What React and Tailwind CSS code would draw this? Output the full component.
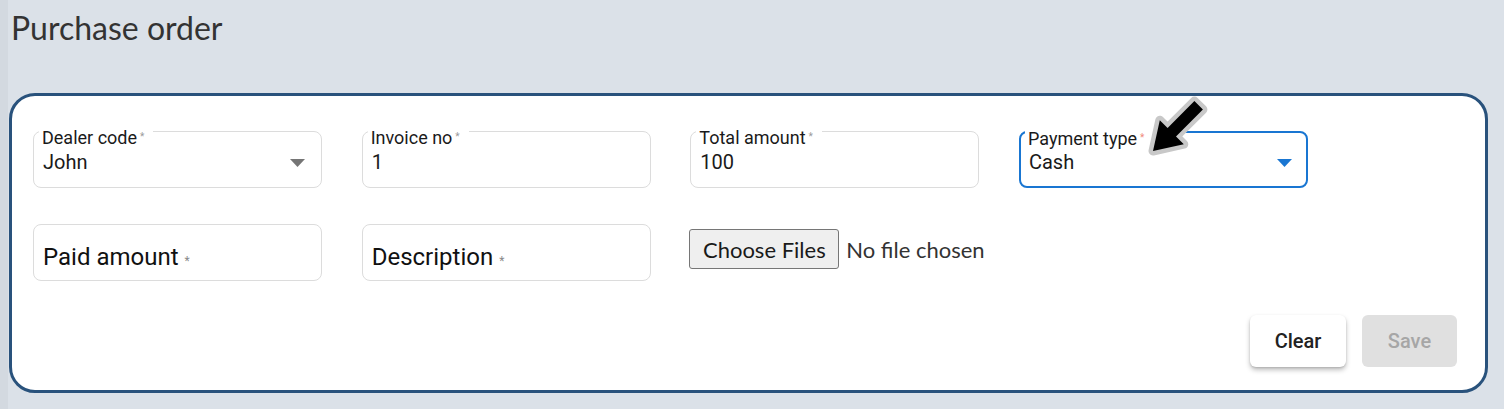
import React from "react";

const roboto = { fontFamily: "Roboto, 'Liberation Sans', sans-serif" };

function Caret({ color }) {
  return (
    <svg width="15" height="8" viewBox="0 0 15 8" className="shrink-0">
      <polygon points="0,0 15,0 7.5,8" fill={color} />
    </svg>
  );
}

function FilledField({ label, value, select, active }) {
  return (
    <div
      className={
        "relative w-[289px] h-[57px] rounded-[8px] bg-white flex items-start " +
        (active ? "border-2 border-[#1976d2]" : "border border-[#dcdcdc]")
      }
    >
      <span
        className={
          "absolute top-[-4px] bg-white pl-[3px] pr-[9px] text-[18px] leading-[18px] text-[#1a1a1a] whitespace-nowrap " +
          (active ? "left-[4px]" : "left-[5px]")
        }
      >
        {label}
        <span
          className={
            "ml-[3px] text-[10px] align-[4px] " +
            (active ? "text-[#f08a7a]" : "text-[#9a9a9a]")
          }
        >
          *
        </span>
      </span>
      <div
        className={
          "flex-1 flex items-center justify-between " +
          (active ? "pt-[17px] pl-[8px] pr-[14px]" : "pt-[18px] pl-[9px] pr-[16px]")
        }
      >
        <span className="text-[20px] leading-[24px] text-[#1a1a1a]">{value}</span>
        {select && (
          <div className="pt-[1px]">
            <Caret color={active ? "#1976d2" : "#757575"} />
          </div>
        )}
      </div>
    </div>
  );
}

function EmptyField({ label }) {
  return (
    <div className="w-[289px] h-[57px] rounded-[8px] bg-white border border-[#dcdcdc] pt-[18px] pl-[9px]">
      <span className="text-[24px] leading-[28px] text-[#111]">
        {label}
        <span className="ml-[6px] text-[12px] text-[#8a8a8a]">*</span>
      </span>
    </div>
  );
}

export default function App() {
  return (
    <div className="relative w-[1504px] h-[409px] bg-[#dbe1e8] flex overflow-hidden" style={roboto}>
      <div className="w-[8px] shrink-0 bg-[#d3d9e0]" />
      <div className="flex-1 pl-[1px] pr-[16px] flex flex-col">
        <h1
          className="pl-[2px] pt-[9px] h-[93px] shrink-0 text-[32px] leading-[38px] text-[#333] font-normal"
          style={{ fontFamily: "Lato, 'Noto Sans', sans-serif" }}
        >
          Purchase order
        </h1>
        <div className="h-[300px] shrink-0 rounded-[26px] border-[3px] border-[#29527c] bg-white pl-[21px] pr-[28px] pt-[35px] flex flex-col">
          <div className="grid grid-cols-[repeat(4,289px)] gap-x-[39.67px] gap-y-[36px]">
            <FilledField label="Dealer code" value="John" select />
            <FilledField label="Invoice no" value="1" />
            <FilledField label="Total amount" value="100" />
            <FilledField label="Payment type" value="Cash" select active />
            <EmptyField label="Paid amount" />
            <EmptyField label="Description" />
            <div
              className="flex items-start pt-[5px] whitespace-nowrap"
              style={{ fontFamily: "Lato, 'Noto Sans', sans-serif" }}
            >
              <span className="shrink-0 w-[150px] h-[40px] -ml-[1px] border border-[#767676] rounded-[3px] bg-[#efefef] flex items-center justify-center text-[22px] text-[#1a1a1a]">
                Choose Files
              </span>
              <span className="shrink-0 ml-[7px] h-[40px] flex items-center text-[22px] text-[#333]">
                No file chosen
              </span>
            </div>
          </div>
          <div className="flex justify-end gap-[16px] mt-[34px]">
            <button className="w-[96px] h-[52px] rounded-[6px] bg-white text-[20px] font-medium text-[#222] shadow-[0_3px_5px_rgba(0,0,0,0.25),0_1px_2px_rgba(0,0,0,0.12)]">
              Clear
            </button>
            <button className="w-[95px] h-[52px] rounded-[6px] bg-[#e0e0e0] text-[20px] font-medium text-[#a6a6a6]">
              Save
            </button>
          </div>
        </div>
      </div>
      <svg className="absolute left-[1135px] top-[90px]" width="80" height="80" viewBox="0 0 80 80">
        <polygon
          points="18,61 24.8,30.2 32.6,38 59.4,11.1 67.9,19.5 41,46.4 48.8,54.2"
          fill="#000"
          stroke="#c8c8c8"
          strokeWidth="9"
          strokeLinejoin="round"
          paintOrder="stroke"
        />
      </svg>
    </div>
  );
}
